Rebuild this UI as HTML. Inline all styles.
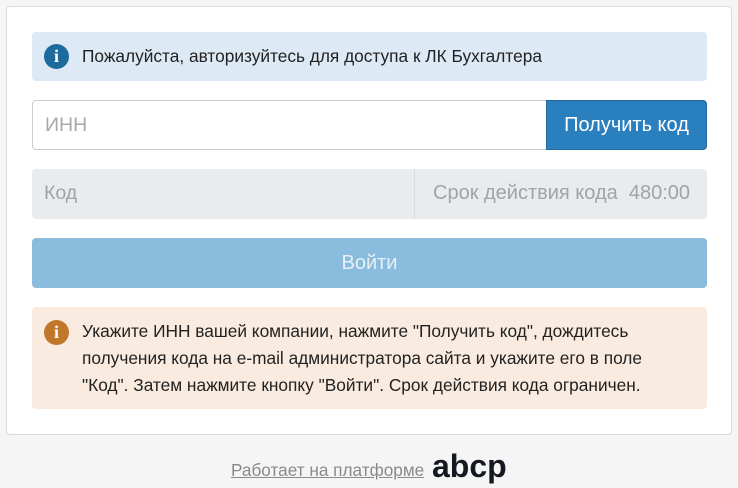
<!DOCTYPE html>
<html><head><meta charset="utf-8"><style>
*{box-sizing:border-box;margin:0;padding:0}
body{width:738px;height:488px;background:#f5f5f5;font-family:"Liberation Sans",sans-serif;position:relative;overflow:hidden;color:#222}
.card{position:absolute;left:6px;top:6px;width:726px;height:429px;background:#fff;border:1px solid #dcdcdc;border-radius:4px}
.abs{position:absolute}
.info{left:32px;top:32px;width:675px;height:49px;background:#dde9f4;border-radius:4px}
.ic{position:absolute;width:25px;height:25px;border-radius:50%;color:#fff;font:bold 18px "Liberation Serif",serif;text-align:center;line-height:25px}
.inp{left:32px;top:100px;width:515px;height:50px;border:1px solid #ccc;border-radius:4px 0 0 4px;font-size:19.5px;color:#a9a9a9;padding:13px 0 0 12px}
.btn{left:546px;top:100px;width:161px;height:50px;background:#2a7fbf;border:1px solid #22679b;border-radius:0 4px 4px 0;color:#fff;font-size:20px;text-align:center;line-height:48px}
.kod{left:32px;top:169px;width:675px;height:50px;background:#e8ecef;border-radius:4px}
.login{left:32px;top:238px;width:675px;height:50px;background:#8abcdd;border-radius:4px;color:#e6f0f8;font-size:20px;text-align:center;line-height:50px}
.warn{left:32px;top:307px;width:675px;height:102px;background:#f9ebdf;border-radius:4px}
</style></head><body>
<div class="card"></div>
<div class="abs info"><div class="ic" style="left:12px;top:12px;background:#1d6a9c">i</div><div class="abs" style="left:50px;top:14px;font-size:17.3px;color:#222">Пожалуйста, авторизуйтесь для доступа к ЛК Бухгалтера</div></div>
<div class="abs inp">ИНН</div>
<div class="abs btn">Получить код</div>
<div class="abs kod"><div class="abs" style="left:12px;top:13px;font-size:19.5px;color:#a0a4a8">Код</div><div class="abs" style="left:382px;top:0;width:1px;height:50px;background:#d6dbdf"></div><div class="abs" style="left:401px;top:13px;font-size:20px;color:#a0a4a8;white-space:pre">Срок действия кода  480:00</div></div>
<div class="abs login">Войти</div>
<div class="abs warn"><div class="ic" style="left:12px;top:13px;background:#c0772a">i</div><div class="abs" style="left:50px;top:11px;font-size:17.3px;line-height:27px;color:#222;width:640px;white-space:nowrap">Укажите ИНН вашей компании, нажмите "Получить код", дождитесь<br>получения кода на e-mail администратора сайта и укажите его в поле<br>"Код". Затем нажмите кнопку "Войти". Срок действия кода ограничен.</div></div>
<div class="abs" style="left:231px;top:460px;font-size:17.2px;color:#8a8a8a;text-decoration:underline">Работает на платформе</div>
<div class="abs" style="left:432px;top:448px;font-size:32px;font-weight:bold;color:#141820;letter-spacing:0">abcp</div>
</body></html>
